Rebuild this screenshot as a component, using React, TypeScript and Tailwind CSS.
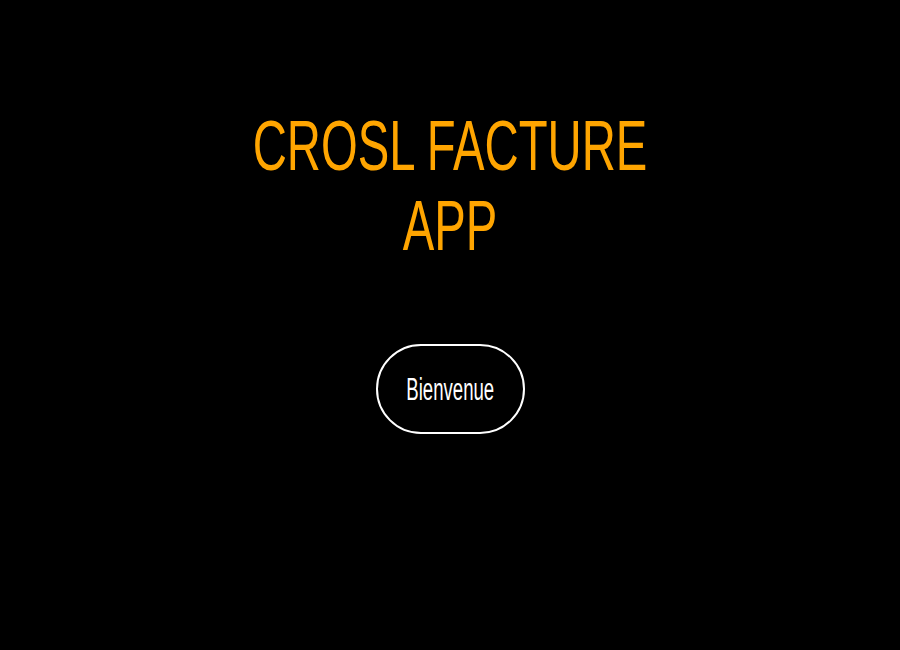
export default function App() {
  return (
    <div
      className="min-h-[650px] w-full bg-black flex flex-col items-center"
      style={{ fontFamily: '"Liberation Sans", Arial, sans-serif' }}
    >
      {/* title is drawn condensed */}
      <h1 className="mt-[106px] w-[620px] text-center text-[70px] leading-[80px] text-[#ffa500] scale-x-[0.675]">
        CROSL FACTURE APP
      </h1>
      <button className="mt-[78px] w-[149px] h-[90px] rounded-full border-2 border-white text-white flex items-center justify-center">
        <span className="inline-block text-[31px] leading-none whitespace-nowrap scale-x-[0.6]">Bienvenue</span>
      </button>
    </div>
  )
}
